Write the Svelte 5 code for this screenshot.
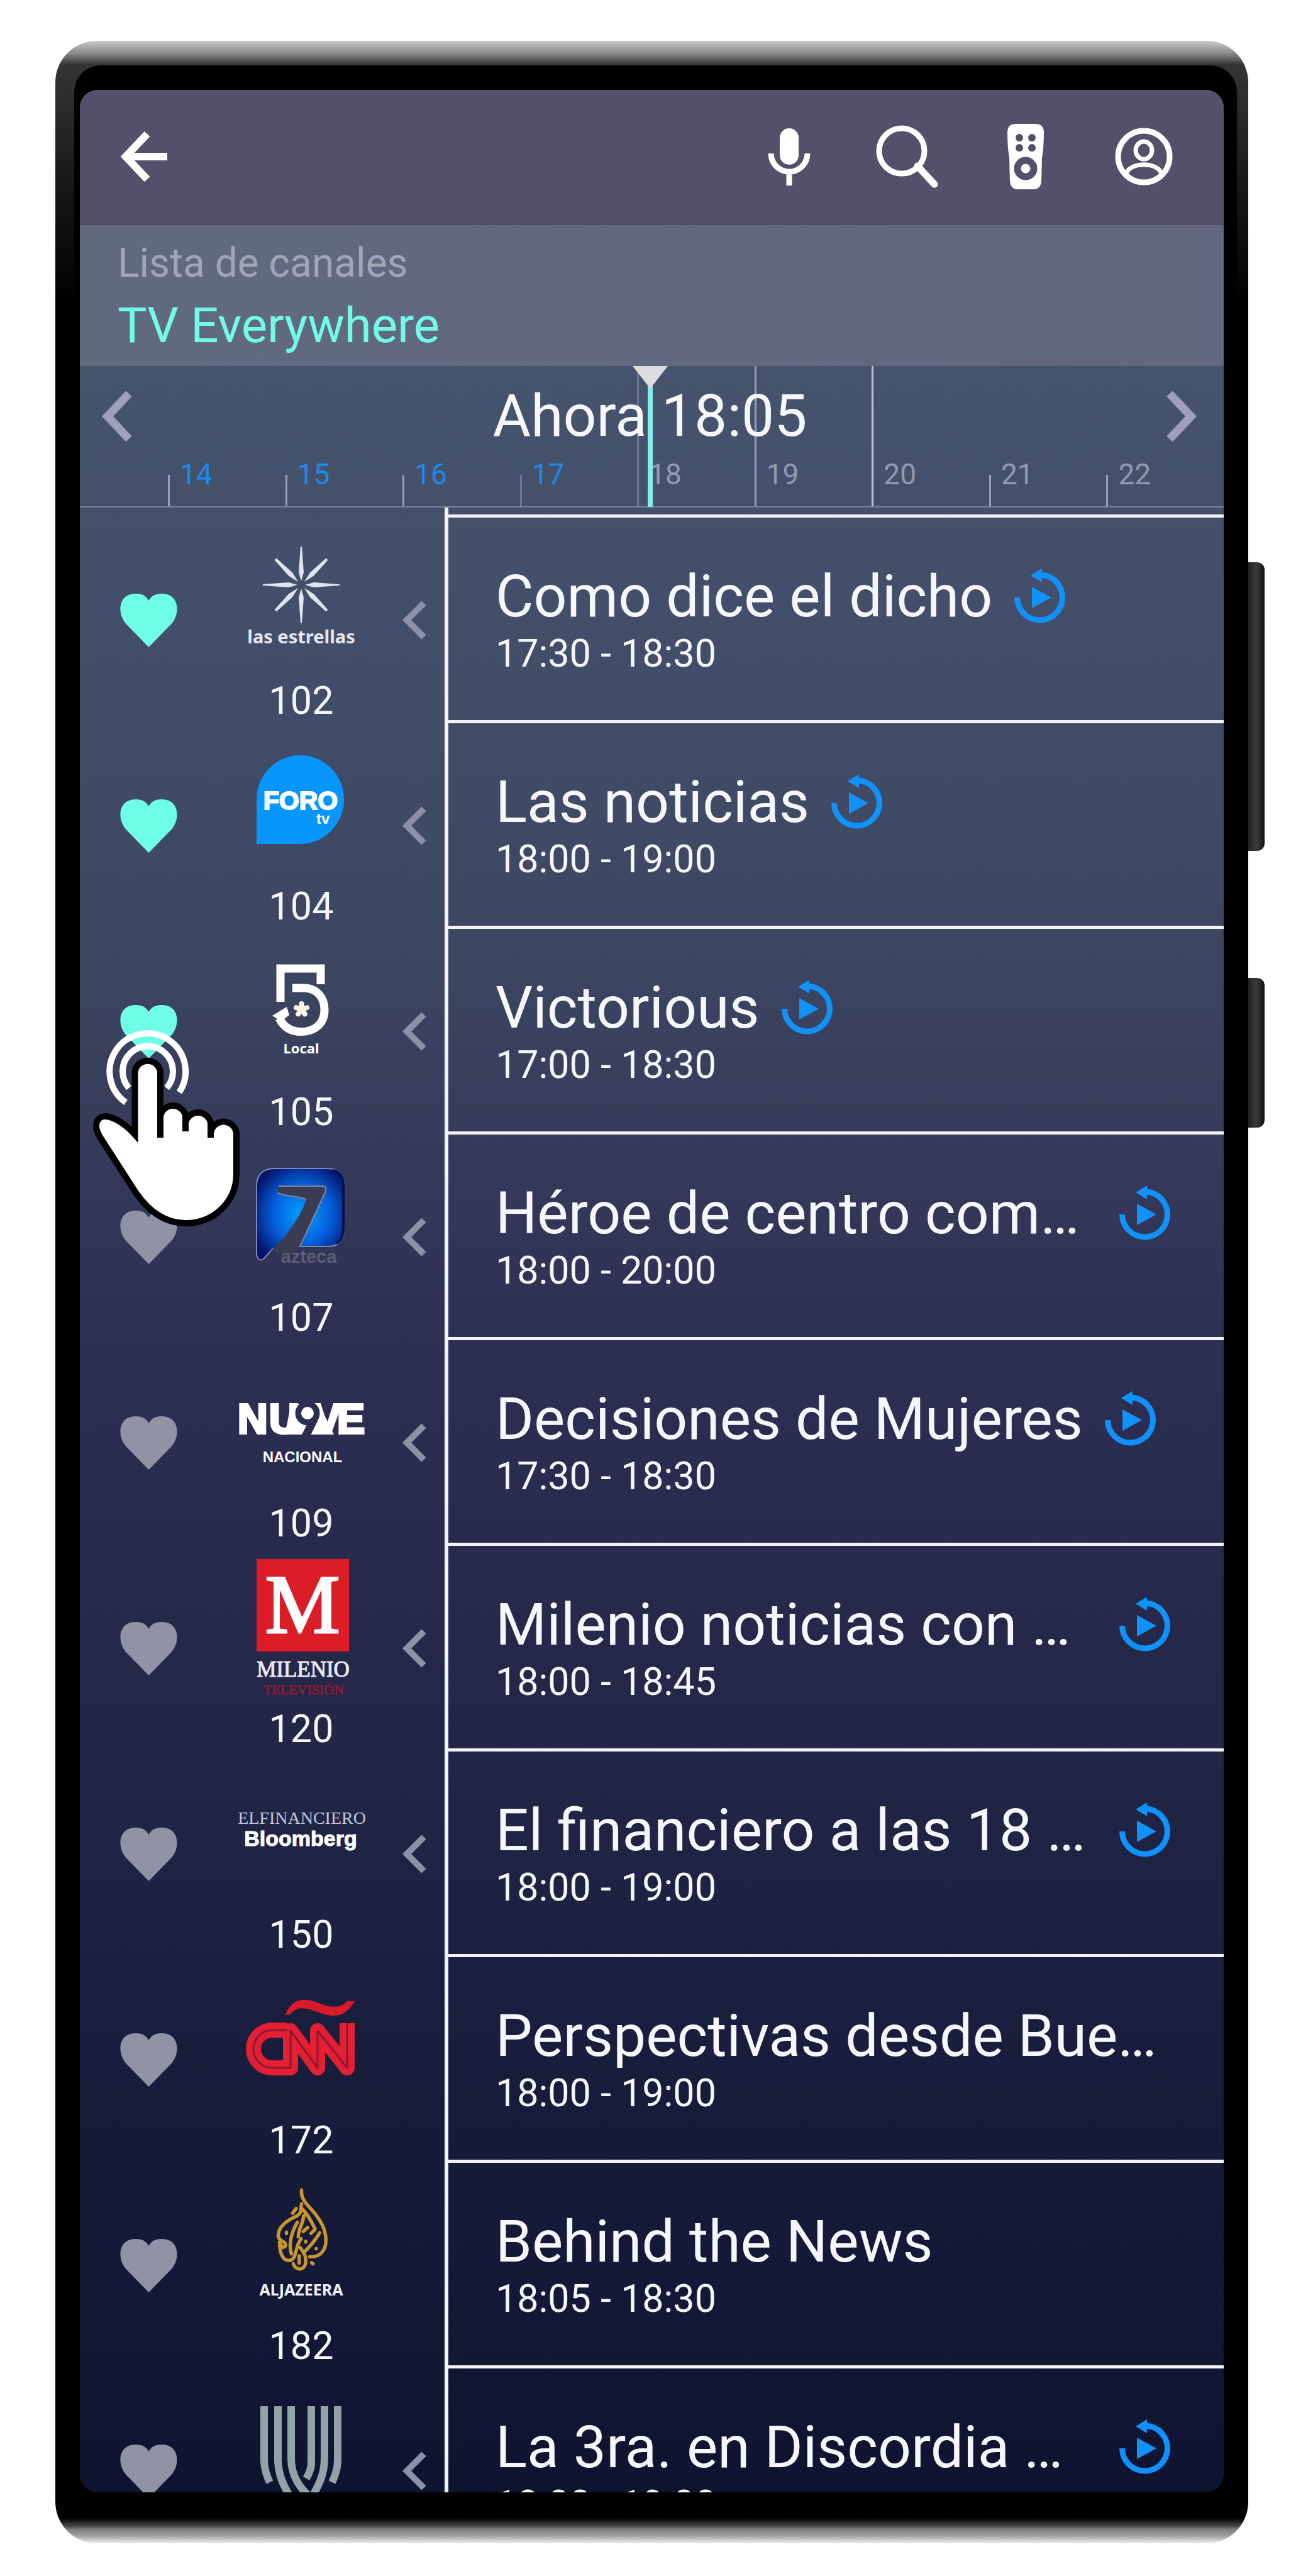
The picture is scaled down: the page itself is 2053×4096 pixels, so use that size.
<script lang="ts">
  type Channel = {
    number: number;
    logo: string;
    title: string;
    time: string;
    favorite?: boolean;
    past?: boolean;
    replay?: boolean;
    clipped?: boolean;
    tapped?: boolean;
  };

  let channels: Channel[] = $state([
    { number: 102, logo: 'estrellas', title: 'Como dice el dicho', time: '17:30 - 18:30', favorite: true, past: true, replay: true },
    { number: 104, logo: 'foro', title: 'Las noticias', time: '18:00 - 19:00', favorite: true, past: true, replay: true },
    { number: 105, logo: 'cinco', title: 'Victorious', time: '17:00 - 18:30', favorite: true, past: true, replay: true, tapped: true },
    { number: 107, logo: 'azteca', title: 'Héroe de centro com…', time: '18:00 - 20:00', past: true, replay: true, clipped: true },
    { number: 109, logo: 'nueve', title: 'Decisiones de Mujeres', time: '17:30 - 18:30', past: true, replay: true },
    { number: 120, logo: 'milenio', title: 'Milenio noticias con …', time: '18:00 - 18:45', past: true, replay: true, clipped: true },
    { number: 150, logo: 'bloomberg', title: 'El financiero a las 18 …', time: '18:00 - 19:00', past: true, replay: true, clipped: true },
    { number: 172, logo: 'cnn', title: 'Perspectivas desde Bue…', time: '18:00 - 19:00' },
    { number: 182, logo: 'aljazeera', title: 'Behind the News', time: '18:05 - 18:30' },
    { number: 200, logo: 'once', title: 'La 3ra. en Discordia …', time: '18:00 - 19:00', past: true, replay: true, clipped: true }
  ]);

  const hours = [
    { label: '14', past: true },
    { label: '15', past: true },
    { label: '16', past: true },
    { label: '17', past: true, faint: true },
    { label: '18', tall: true, faint: true },
    { label: '19', tall: true },
    { label: '20', tall: true, bright: true },
    { label: '21' },
    { label: '22' }
  ];
</script>

{#snippet logo(name: string)}
  <svg class="logo" viewBox="0 0 200 240" aria-hidden="true">
    {#if name === 'estrellas'}
      <g fill="#dfe4f0">
        {#each [0, 90, 180, 270] as a}
          <path d="M100 88 L96 74 L99 33 H101 L104 74 Z" transform="rotate({a} 100 94)" />
        {/each}
        {#each [45, 135, 225, 315] as a}
          <path d="M100 87 L96 70 L98 36 H102 L104 70 Z" transform="rotate({a} 100 94)" />
        {/each}
      </g>
      <text class="noto" x="100" y="187" font-size="29" text-anchor="middle" fill="#e4e7f1">las estrellas</text>
    {:else if name === 'foro'}
      <path d="M29 179 V108 A69.500 70 0 0 1 168 108 A69.500 71 0 0 1 99 179 Z" fill="#0796fd" />
      <text class="arial" x="99" y="124" font-size="41" text-anchor="middle" fill="#fff" stroke="#fff" stroke-width="2">FORO</text>
      <text class="arial" x="124" y="147" font-size="24" fill="#fff">tv</text>
    {:else if name === 'cinco'}
      <g fill="none" stroke="#fff" stroke-width="13">
        <path d="M67 103 V50 H131 V75" />
        <path d="M86 81 H104 C125 81 137 96 137 116 C137 138 121 150.500 100 150.500 C84 150.500 72 143 65 129" />
      </g>
      <path d="M54 125 L77 111 L81 124 L68 134 Z" fill="#fff" />
      <g stroke="#fdf9e6" stroke-width="8" stroke-linecap="round">
        {#each [0, 72, 144, 216, 288] as a}
          <path d="M100.500 115 V106" transform="rotate({a} 100.500 115)" />
        {/each}
      </g>
      <text class="noto" x="100" y="185" font-size="22" text-anchor="middle" fill="#fff">Local</text>
    {:else if name === 'azteca'}
      <defs>
        <radialGradient id="azteca-blue" cx="52%" cy="50%" r="60%">
          <stop offset="0" stop-color="#00a0ff" />
          <stop offset=".55" stop-color="#0560dc" />
          <stop offset="1" stop-color="#04136c" />
        </radialGradient>
      </defs>
      <path d="M58 41 H142 Q168 41 168 68 V138 Q168 165 142 165 H98 L55 168 L40 185 Q31 190 29 177 V68 Q30 41 58 41 Z" fill="url(#azteca-blue)" stroke="#8087b4" stroke-width="2" />
      <path d="M150 44 Q166 46 167 66 V138 Q166 156 156 160" fill="none" stroke="#03124e" stroke-width="4" />
      <path d="M64 69 H134 Q142 69 138 79 L98 165 L86 178 L52 172 C75 150 95 125 108 91 C92 84 78 86 62 80 Z" fill="#3a3c53" />
      <path d="M64 69 H134 Q142 69 138 79 L98 165 H136 M62 80 C78 86 92 84 108 90" fill="none" stroke="#8087a0" stroke-width="2" />
      <text class="arial" x="112" y="191" font-size="29" text-anchor="middle" fill="#5c5e74">azteca</text>
    {:else if name === 'nueve'}
      <g class="arial" fill="#fff" stroke="#fff" stroke-width="4" font-size="66">
        <text x="-1" y="135">N</text>
        <text x="49" y="135">U</text>
        <text x="119" y="135">V</text>
        <text x="157" y="135">E</text>
      </g>
      <path d="M84 88 H98 L104 121 L110 121 L101 137 H74 Z M122 88 H128 L152 137 H115 L129 110 Z" fill="#fff" />
      <circle cx="110" cy="103" r="19.500" fill="#2b2e50" />
      <path d="M109 121 L101 138 H115 L129 108 L118 106 Z" fill="#2b2e50" />
      <circle cx="110" cy="103" r="10" fill="#fff" />
      <text class="arial" x="102" y="181" font-size="24" text-anchor="middle" fill="#fff">NACIONAL</text>
    {:else if name === 'milenio'}
      <rect x="29" y="8" width="147" height="147" fill="#da1d26" />
      <text class="serif" x="102" y="125" font-size="134" text-anchor="middle" fill="#fff" stroke="#fff" stroke-width="3">M</text>
      <text class="serif" x="103" y="195" font-size="35" text-anchor="middle" fill="#e8eaf4" stroke="#e8eaf4" stroke-width="1">MILENIO</text>
      <text class="serif" x="104" y="223" font-size="22" text-anchor="middle" fill="#8c1c38" stroke="#8c1c38" stroke-width="1">TELEVISIÓN</text>
    {:else if name === 'bloomberg'}
      <text class="serif" x="101" y="102" font-size="28" text-anchor="middle" fill="#c4c7da">ELFINANCIERO</text>
      <text class="arial" x="99" y="137" font-size="34" text-anchor="middle" fill="#fff" stroke="#fff" stroke-width="1">Bloomberg</text>
    {:else if name === 'cnn'}
      <g fill="none" stroke-linejoin="round">
        <path d="M78 103 H54 A30 30 0 0 0 54 163 H83 V104 L126 163 V104 L173 163 V92" stroke="#e21f33" stroke-width="24" />
        <path d="M78 103 H54 A30 30 0 0 0 54 163 H83 V104 L126 163 V104 L173 163 V92" stroke="#8c1630" stroke-width="3" />
      </g>
      <path d="M75 79 C86 48 110 53 128 60 C150 69 164 67 173 57 H185 C172 80 156 84 134 77 C112 69 94 62 83 78 Z" fill="#d81b2a" />
    {:else if name === 'aljazeera'}
      <g transform="translate(-15 21) scale(.209)" fill="none" stroke="#c8962f" stroke-width="26" stroke-linecap="round" stroke-linejoin="round">
        <path d="M553 45 C545 110 590 150 640 205 C700 280 738 340 738 430 C738 510 690 555 615 552" />
        <path d="M553 150 C540 200 560 210 520 240 C450 270 375 320 375 395 C378 440 440 430 430 470 C410 500 385 450 385 440 C385 540 420 585 460 580 C520 575 500 470 550 415" />
        <path d="M560 190 C610 240 630 290 655 340 M570 240 C560 320 530 330 528 400 M520 290 C470 380 455 460 475 530" />
        <path d="M690 370 C650 440 610 480 580 510 M540 480 C580 530 590 560 582 610 C560 665 505 650 490 605" />
        <path d="M600 330 L565 360 M650 350 L625 375 M512 185 L485 220 M438 365 V375 M585 435 V440 M665 490 V492 M535 545 V600 M630 598 L640 606" />
      </g>
      <text class="noto" x="100" y="198" font-size="25" text-anchor="middle" fill="#f0f1fa">ALJAZEERA</text>
    {:else}
      <g fill="none" stroke="#93a1a8" stroke-width="12">
        <path d="M41 47 V135 Q42 152 50 168" />
        <path d="M63 47 V135 Q64 162 82 190" />
        <path d="M84 47 V130 C84 160 100 178 112 190" />
        <path d="M116 47 V140 Q115 150 108 162" />
        <path d="M137 47 V130 C137 155 128 172 118 190" />
        <path d="M158 47 V135 Q157 152 149 168" />
      </g>
    {/if}
  </svg>
{/snippet}

<main class="page">
  <div class="phone">
    <div class="bezel">
      <div class="screen">
        <header class="toolbar">
          <button aria-label="Volver">
            <svg viewBox="0 0 96 96"><path d="M52 12 L18 48 L52 84 M20 48 H84" fill="none" stroke="currentColor" stroke-width="12" /></svg>
          </button>
          <span class="spacer"></span>
          <button aria-label="Buscar por voz">
            <svg viewBox="0 0 96 96">
              <rect x="33" y="3" width="30" height="58" rx="15" fill="currentColor" />
              <path d="M19 43 A29 29 0 0 0 77 43 M48 72 V94" fill="none" stroke="currentColor" stroke-width="9" />
            </svg>
          </button>
          <button aria-label="Buscar">
            <svg viewBox="0 0 96 96">
              <circle cx="39" cy="39" r="36" fill="none" stroke="currentColor" stroke-width="9" />
              <path d="M64 63 L91 92" stroke="currentColor" stroke-width="11" stroke-linecap="round" />
            </svg>
          </button>
          <button aria-label="Control remoto">
            <svg viewBox="0 0 96 106">
              <path d="M32 1 H64 Q77 1 77 15 Q77 38 74 55 L73 92 Q72 105 60 105 H36 Q24 105 23 92 L22 55 Q19 38 19 15 Q19 1 32 1 Z" fill="currentColor" />
              <g fill="#55506a">
                <circle cx="38" cy="23" r="6" /><circle cx="58" cy="23" r="6" />
                <circle cx="38" cy="39" r="6" /><circle cx="58" cy="39" r="6" />
              </g>
              <circle cx="48" cy="72" r="13" fill="none" stroke="#55506a" stroke-width="11" />
            </svg>
          </button>
          <button aria-label="Perfil">
            <svg viewBox="0 0 96 96" fill="none" stroke="currentColor" stroke-width="9">
              <circle cx="48" cy="48" r="41" />
              <ellipse cx="48" cy="38" rx="13" ry="14" stroke-width="7" />
              <path d="M20 75 C26 56 70 56 76 75" stroke-width="7" />
            </svg>
          </button>
        </header>

        <section class="source">
          <p>Lista de canales</p>
          <h1>TV Everywhere</h1>
        </section>

        <section class="timeline">
          <ol class="ruler">
            {#each hours as hour}
              <li class:past={hour.past} class:tall={hour.tall} class:faint={hour.faint} class:bright={hour.bright}>
                <i></i><span>{hour.label}</span>
              </li>
            {/each}
          </ol>
          <svg class="now" viewBox="0 0 56 224" aria-hidden="true">
            <path d="M28 20 V224" stroke="#84ece8" stroke-width="8" />
            <path d="M0 0 H56 L28 36 Z" fill="#dcdde0" />
          </svg>
          <div class="clock">
            <button aria-label="Anterior">
              <svg viewBox="0 0 50 80"><path d="M42 4 L8 40 L42 76" fill="none" stroke="currentColor" stroke-width="13" /></svg>
            </button>
            <h2>Ahora 18:05</h2>
            <button aria-label="Siguiente">
              <svg viewBox="0 0 50 80"><path d="M6 4 L40 40 L6 76" fill="none" stroke="currentColor" stroke-width="13" /></svg>
            </button>
          </div>
        </section>

        <ul class="guide">
          {#each channels as channel}
            <li class="row" class:tapped={channel.tapped}>
              <div class="channel">
                <button
                  class="heart"
                  class:on={channel.favorite}
                  aria-pressed={!!channel.favorite}
                  aria-label="Favorito {channel.number}"
                  onclick={() => (channel.favorite = !channel.favorite)}
                >
                  <svg viewBox="0 0 94 86"><path d="M47 86 L11 49 C-4 33 -3 0 26 0 C37 0 43 4 47 11 C51 4 57 0 68 0 C97 0 98 33 83 49 Z" fill="currentColor" /></svg>
                </button>
                <div class="identity">
                  {@render logo(channel.logo)}
                  <span class="number">{channel.number}</span>
                </div>
                {#if channel.past}
                  <button class="back" aria-label="Programas anteriores">
                    <svg viewBox="0 0 38 60"><path d="M34 3 L7 30 L34 57" fill="none" stroke="currentColor" stroke-width="10" /></svg>
                  </button>
                {/if}
                {#if channel.tapped}
                  <svg class="pointer" viewBox="0 0 240 317" aria-hidden="true">
                    <g fill="none" stroke="#fff" stroke-width="10">
                      <path d="M55 117 A60.400 60.400 0 1 1 140 101" />
                      <path d="M60 94 A40 40 0 1 1 120 94" />
                    </g>
                    <path
                      d="M69.500 168 V68 A20.500 20.500 0 0 1 110 68 V138 A20.500 20.500 0 0 1 150 138 V149 A20.500 20.500 0 0 1 190 149 V168 A20.500 20.500 0 0 1 231 168 V230 C231 275 195 309 150 309 C112 309 87 284 70 259 L14 172 C2 152 10 138 24 139 C40 141 58 155 69.500 168 Z"
                      fill="#fff" stroke="#000" stroke-width="10"
                    />
                    <path d="M110 130 V173 M150 138 V163 M190 149 V173" stroke="#000" stroke-width="10" />
                  </svg>
                {/if}
              </div>
              <article class="program">
                <div class="heading" class:clipped={channel.clipped}>
                  <h3>{channel.title}</h3>
                  {#if channel.replay}
                    <button aria-label="Ver desde el inicio">
                      <svg viewBox="0 0 84 86" fill="#0f93fb">
                        <path d="M5.500 44 A36 36 0 1 0 44 8" fill="none" stroke="#0f93fb" stroke-width="9" />
                        <path d="M27 9 L45 -2 V20 Z" />
                        <path d="M29 27 V61 L60 44 Z" />
                      </svg>
                    </button>
                  {/if}
                </div>
                <time>{channel.time}</time>
              </article>
            </li>
          {/each}
        </ul>
      </div>
    </div>
  </div>
  <div class="keys" aria-hidden="true">
    <span class="volume"></span>
    <span class="power"></span>
  </div>
</main>

<style>
  :global(body) {
    background: #fff;
  }

  * {
    box-sizing: border-box;
    margin: 0;
    padding: 0;
  }

  button {
    display: flex;
    align-items: center;
    justify-content: center;
    flex: none;
    border: 0;
    background: none;
    color: inherit;
    cursor: pointer;
  }

  svg {
    display: block;
    overflow: visible;
  }

  ul,
  ol {
    list-style: none;
  }

  .page {
    display: flex;
    height: 100vh;
    padding: 65px 42px 52px 88px;
    font-family: Roboto, 'Liberation Sans', sans-serif;
    color: #f6f7fc;
  }

  .phone {
    display: flex;
    flex: 1;
    min-width: 0;
    padding: 39px 18px 44px 30px;
    border-radius: 66px;
    background: linear-gradient(
      #cacaca 0,
      #8a8a8a 20px,
      #333 38px,
      #303030 70px,
      #161616 240px,
      #000 420px,
      #000 calc(100% - 40px),
      #4a4a4a calc(100% - 27px),
      #808080 calc(100% - 22px),
      #a0a0a0 calc(100% - 12px),
      #eee 100%
    );
  }

  .bezel {
    display: flex;
    flex: 1;
    min-width: 0;
    padding: 39px 21px 37px 9px;
    border-radius: 42px;
    background: #000;
  }

  .screen {
    display: flex;
    flex: 1;
    flex-direction: column;
    min-width: 0;
    overflow: hidden;
    border-radius: 28px;
    background: linear-gradient(
      #46536d 12%,
      #424e69 24%,
      #3c4661 36%,
      #363a5a 44%,
      #2d3053 52%,
      #26294a 63%,
      #1f2344 73%,
      #171c3b 84%,
      #0e1430 100%
    );
  }

  .toolbar {
    display: flex;
    flex: none;
    align-items: center;
    height: 215px;
    padding: 0 33px 4px 9px;
    background: #55506a;
    color: #fff;
  }

  .toolbar button {
    width: 188px;
    height: 188px;
  }

  .toolbar svg {
    width: 96px;
  }

  .spacer {
    flex: 1;
  }

  .source {
    flex: none;
    height: 224px;
    padding: 21px 60px 0;
    background: linear-gradient(90deg, #5f6a81, #62667f);
  }

  .source p {
    font-size: 64px;
    line-height: 80px;
    color: #a2a5b6;
  }

  .source h1 {
    margin-top: 14px;
    font-size: 78px;
    font-weight: 400;
    line-height: 90px;
    color: #72fbe9;
  }

  .timeline {
    display: grid;
    flex: none;
    position: relative;
    height: 225px;
    border-bottom: 2px solid #77819a;
  }

  .ruler,
  .clock {
    grid-area: 1 / 1;
  }

  .ruler {
    display: grid;
    grid-template-columns: repeat(9, 1fr);
    padding-left: 140px;
  }

  .ruler li {
    display: flex;
    align-items: flex-end;
    gap: 16px;
    color: #9299b0;
  }

  .ruler i {
    width: 3px;
    height: 50px;
    background: #98a1b8;
  }

  .ruler span {
    padding-bottom: 24px;
    font-size: 46px;
    line-height: 54px;
  }

  .ruler .past {
    color: #2089e8;
  }

  .ruler .tall i {
    height: 100%;
  }

  .ruler .faint i {
    background: #6d7890;
  }

  .ruler .bright i {
    background: #bcc3d4;
  }

  .now {
    position: absolute;
    left: calc(50% - 31px);
    top: 0;
    width: 56px;
    height: 224px;
  }

  .clock {
    display: flex;
    align-items: center;
    justify-content: space-between;
    align-self: start;
    padding: 26px 6px 0 0;
    color: #9da2ba;
  }

  .clock button {
    width: 122px;
    height: 108px;
  }

  .clock svg {
    width: 50px;
  }

  .clock h2,
  h3 {
    font-size: 93px;
    font-weight: 400;
    line-height: 108px;
    white-space: nowrap;
    color: #f6f7fc;
  }

  .guide {
    flex: 1;
    min-height: 0;
    overflow: hidden;
  }

  .guide::before {
    display: block;
    width: 580px;
    height: 11px;
    border-right: 6px solid #f2f3f8;
    content: '';
  }

  .row {
    display: grid;
    grid-template-columns: 586px 1fr;
    height: 327px;
  }

  .tapped .channel {
    position: relative;
    z-index: 1;
  }

  .channel {
    display: grid;
    grid-template-columns: 218px 268px 92px;
    border-right: 6px solid #f2f3f8;
  }

  .heart {
    padding-top: 10px;
    color: #9093a6;
  }

  .heart.on {
    color: #70fde6;
  }

  .heart svg {
    width: 93px;
  }

  .identity {
    display: flex;
    flex-direction: column;
    align-items: center;
    gap: 8px;
    padding-top: 18px;
  }

  .logo {
    width: 200px;
    height: 240px;
  }

  .number,
  time {
    font-size: 61px;
  }

  .number {
    line-height: 60px;
  }

  .back {
    padding-top: 8px;
    color: #8d91a8;
  }

  .back svg {
    width: 38px;
  }

  .pointer {
    position: absolute;
    left: 18px;
    top: 164px;
    width: 240px;
    pointer-events: none;
  }

  .program {
    min-width: 0;
    padding: 72px 83px 0 75px;
    border-top: 5px solid #f2f3f8;
  }

  .heading {
    display: flex;
    align-items: center;
    gap: 34px;
  }

  .heading.clipped {
    justify-content: space-between;
    gap: 0;
  }

  .heading svg {
    width: 84px;
  }

  time {
    display: block;
    line-height: 72px;
  }

  .arial {
    font-family: 'Liberation Sans', sans-serif;
    font-weight: 700;
  }

  .noto {
    font-family: 'Noto Sans', sans-serif;
    font-weight: 700;
  }

  .serif {
    font-family: 'Liberation Serif', serif;
  }

  .keys {
    flex: none;
    width: 26px;
    padding-top: 829px;
  }

  .keys span {
    display: block;
    border-radius: 0 12px 12px 0;
    background: linear-gradient(90deg, #222, #3c3c3c 50%, #111);
  }

  .keys .volume {
    height: 459px;
  }

  .keys .power {
    height: 238px;
    margin-top: 202px;
  }
</style>
